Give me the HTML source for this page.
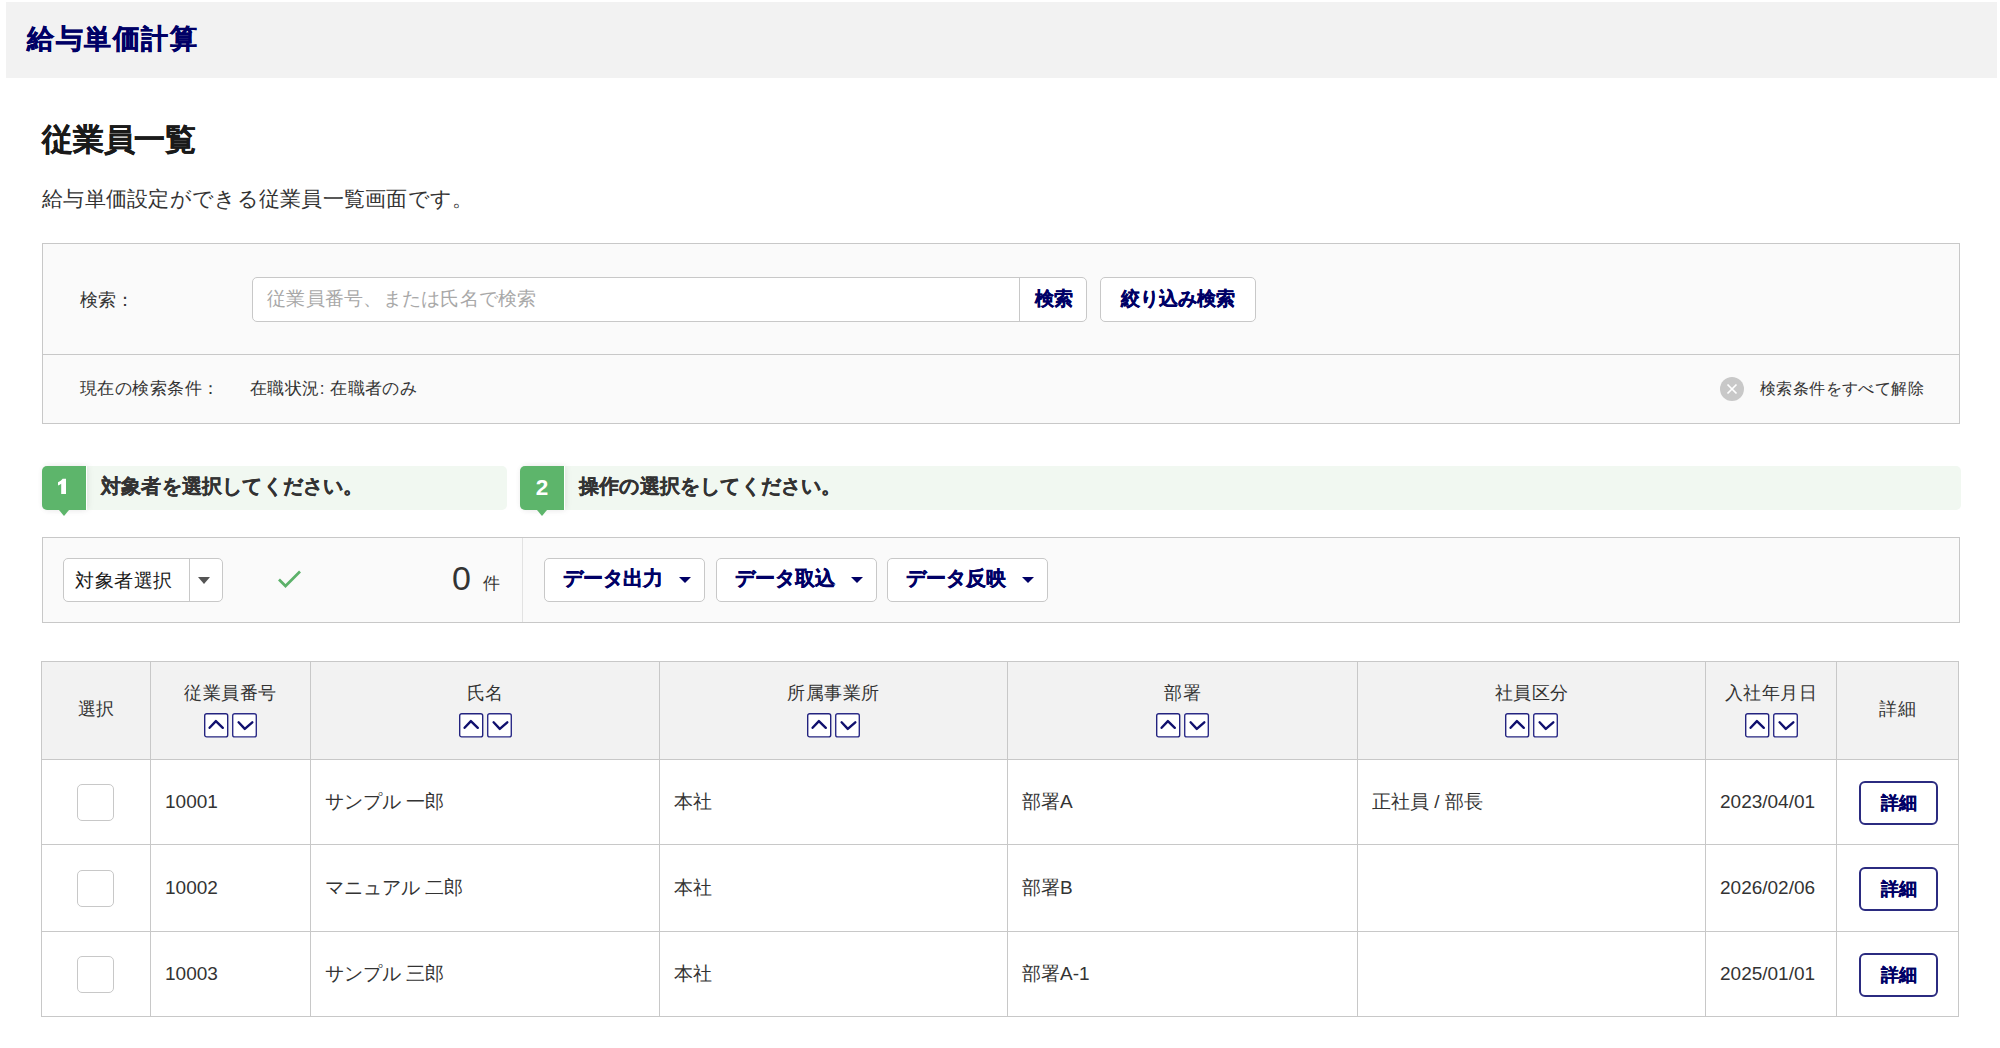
<!DOCTYPE html>
<html lang="ja">
<head>
<meta charset="utf-8">
<title>従業員一覧</title>
<style>
*{box-sizing:border-box;margin:0;padding:0}
html,body{width:2000px;height:1048px;background:#fff;overflow:hidden}
body{font-family:"Liberation Sans",sans-serif;color:#333;position:relative}
.abs{position:absolute}
.nw{white-space:nowrap;line-height:1}
#hdr{left:6px;top:2px;width:1991px;height:76px;background:#f2f2f2}
#hdr .t{left:21px;top:24px;font-size:27px;letter-spacing:1.6px;font-weight:bold;color:#000066;-webkit-text-stroke:0.5px #000066}
#h1{left:42px;top:124px;font-size:30.5px;letter-spacing:-0.2px;font-weight:bold;color:#1a1a1a;-webkit-text-stroke:0.35px #1a1a1a}
#desc{left:42px;top:188px;font-size:21px;letter-spacing:0.28px;color:#333}

#search{left:42px;top:243px;width:1918px;height:181px;background:#fafafa;border:1px solid #c8c8c8}
#search .div{left:0;top:110px;width:100%;height:1px;background:#c8c8c8}
.lbl{font-size:18px;color:#333}
#inp{left:209px;top:33px;width:835px;height:45px;background:#fff;border:1px solid #c8c8c8;border-radius:5px}
#inp .ph{left:14px;top:11px;font-size:19.25px;letter-spacing:0.25px;color:#a8a8a8}
#inp .sep{left:766px;top:0;width:1px;height:43px;background:#c8c8c8}
#inp .btn{left:767px;top:0;width:67px;height:43px;font-size:19px;font-weight:bold;color:#000066;-webkit-text-stroke:0.35px #000066;text-align:center;line-height:41px}
#shb{left:1057px;top:33px;width:156px;height:45px;background:#fff;border:1px solid #c8c8c8;border-radius:5px;font-size:19px;font-weight:bold;color:#000066;-webkit-text-stroke:0.35px #000066;text-align:center;line-height:41px}
.cond{font-size:17px;letter-spacing:0.45px;color:#333}
#clr{left:1677px;top:133px;width:24px;height:24px;border-radius:50%;background:#c8c8c8}

.step{top:466px;height:44px;background:#f1f8f1;border-radius:5px}
.step .num{left:0;top:0;width:44px;height:44px;background:#5db56b;border-radius:5px 0 0 5px;box-shadow:1px 0 0 #fff,2px 0 7px rgba(0,0,0,0.07),0 0 6px rgba(0,0,0,0.04);color:#fff;font-weight:bold;font-size:22.5px;text-align:center;line-height:44px}
.step .num:after{content:"";position:absolute;left:17px;top:44px;border-left:5px solid transparent;border-right:5px solid transparent;border-top:6px solid #5db56b}
.step .txt{left:59px;top:11px;font-size:19.6px;letter-spacing:0.2px;font-weight:bold;color:#333;-webkit-text-stroke:0.3px #333}

#act{left:42px;top:537px;width:1918px;height:86px;background:#fafafa;border:1px solid #c8c8c8}
#act .vdiv{left:479px;top:0;width:1px;height:84px;background:#e2e2e2}
#sel{left:20px;top:20px;width:160px;height:44px;background:#fff;border:1px solid #c8c8c8;border-radius:5px}
#sel .t{left:11px;top:12px;font-size:19.2px;letter-spacing:0.6px;color:#1a1a1a}
#sel .sep{left:125px;top:0;width:1px;height:42px;background:#c8c8c8}
.caret{width:0;height:0;border-left:6.5px solid transparent;border-right:6.5px solid transparent;border-top:7px solid #555}
.dbtn{top:20px;height:44px;width:161px;background:#fff;border:1px solid #c8c8c8;border-radius:5px}
.dbtn .t{left:18px;top:9px;font-size:20px;font-weight:bold;color:#000066;-webkit-text-stroke:0.35px #000066}
.dbtn .caret{left:134px;top:18px;border-left-width:6px;border-right-width:6px;border-top:6px solid #000066}

#tbl{left:41px;top:661px;border-collapse:collapse;table-layout:fixed}
#tbl td,#tbl th{border:1px solid #c8c8c8;vertical-align:middle}
#tbl th{background:#f2f2f2;height:98px;font-weight:normal;font-size:18.4px;letter-spacing:0.5px;line-height:1;color:#333;text-align:center;vertical-align:top;padding-top:22px}
#tbl th.one{padding-top:0;padding-bottom:2px;vertical-align:middle}
#tbl td{font-size:19px;color:#333;padding-left:14px;padding-bottom:1px;background:#fff}
.sorts{display:flex;justify-content:center;margin-top:11px;padding-left:1px}
.sb{width:24px;height:24px;border:2px solid #30308a;border-radius:3px;background:#fff;position:relative}
.sb svg{position:absolute;left:2px;top:2px}
.cb{width:37px;height:37px;border:1px solid #c8c8c8;border-radius:5px;background:#fff;margin:0 0 0 35px}
.det{width:79px;height:44px;border:2px solid #2b2b80;border-radius:6px;background:#fff;font-weight:bold;font-size:18px;color:#000066;-webkit-text-stroke:0.2px #000066;text-align:center;line-height:40px;margin:0 auto;position:relative;left:1px;top:1px}
</style>
</head>
<body>
<div id="hdr" class="abs"><div class="t abs nw">給与単価計算</div></div>
<div id="h1" class="abs nw">従業員一覧</div>
<div id="desc" class="abs nw">給与単価設定ができる従業員一覧画面です。</div>

<div id="search" class="abs">
  <div class="abs nw lbl" style="left:37px;top:47px">検索：</div>
  <div id="inp" class="abs">
    <div class="ph abs nw">従業員番号、または氏名で検索</div>
    <div class="sep abs"></div>
    <div class="btn abs nw">検索</div>
  </div>
  <div id="shb" class="abs nw">絞り込み検索</div>
  <div class="div abs"></div>
  <div class="abs nw cond" style="left:37px;top:136px">現在の検索条件：</div>
  <div class="abs nw cond" style="left:207px;top:136px">在職状況: 在職者のみ</div>
  <div id="clr" class="abs"><svg width="24" height="24" viewBox="0 0 24 24"><path d="M7.5 7.5L16.5 16.5M16.5 7.5L7.5 16.5" stroke="#fff" stroke-width="1.7" fill="none"/></svg></div>
  <div class="abs nw cond" style="left:1717px;top:136px;font-size:16.4px;letter-spacing:0.4px">検索条件をすべて解除</div>
</div>

<div class="step abs" style="left:42px;width:465px">
  <div class="num abs"><svg style="position:absolute;left:0;top:0" width="44" height="44" viewBox="0 0 44 44"><path d="M24 12.8H20.6C19.6 14.3 18 15.6 16 16.3V19.5C17.2 19.1 18.3 18.5 19.2 17.7V27.9H24Z" fill="#fff"/></svg></div>
  <div class="txt abs nw">対象者を選択してください。</div>
</div>
<div class="step abs" style="left:520px;width:1441px">
  <div class="num abs">2</div>
  <div class="txt abs nw">操作の選択をしてください。</div>
</div>

<div id="act" class="abs">
  <div id="sel" class="abs">
    <div class="t abs nw">対象者選択</div>
    <div class="sep abs"></div>
    <div class="caret abs" style="left:134px;top:18px"></div>
  </div>
  <svg class="abs" style="left:233px;top:30px" width="28" height="22" viewBox="0 0 28 22"><path d="M3 11.5L9.5 18L24 3.5" stroke="#5cb16a" stroke-width="2.7" fill="none"/></svg>
  <div class="abs nw" style="left:409px;top:23px;font-size:34px;color:#333">0</div>
  <div class="abs nw" style="left:440px;top:37px;font-size:17px;color:#333">件</div>
  <div class="vdiv abs"></div>
  <div class="dbtn abs" style="left:501px"><div class="t abs nw">データ出力</div><div class="caret abs"></div></div>
  <div class="dbtn abs" style="left:673px"><div class="t abs nw">データ取込</div><div class="caret abs"></div></div>
  <div class="dbtn abs" style="left:844px"><div class="t abs nw">データ反映</div><div class="caret abs"></div></div>
</div>

<table id="tbl" class="abs">
<colgroup><col style="width:109px"><col style="width:160px"><col style="width:349px"><col style="width:348px"><col style="width:350px"><col style="width:348px"><col style="width:131px"><col style="width:122px"></colgroup>
<tr>
<th class="one">選択</th>
<th>従業員番号<div class="sorts"><svg width="54" height="25" viewBox="0 0 54 25"><rect x="0.7" y="0.7" width="23" height="23.2" rx="2" fill="#fff" stroke="#23237f" stroke-width="1.4"/><rect x="28.7" y="0.7" width="23.6" height="23.2" rx="2" fill="#fff" stroke="#2c2c88" stroke-width="1.4"/><path d="M5.6 14.8L11.9 8.1L18.8 14.8" stroke="#10106e" stroke-width="2.4" stroke-linecap="round" stroke-linejoin="round" fill="none"/><path d="M34.6 9.3L40.8 15.9L48.3 9.3" stroke="#10106e" stroke-width="2.4" stroke-linecap="round" stroke-linejoin="round" fill="none"/></svg></div></th>
<th>氏名<div class="sorts"><svg width="54" height="25" viewBox="0 0 54 25"><rect x="0.7" y="0.7" width="23" height="23.2" rx="2" fill="#fff" stroke="#23237f" stroke-width="1.4"/><rect x="28.7" y="0.7" width="23.6" height="23.2" rx="2" fill="#fff" stroke="#2c2c88" stroke-width="1.4"/><path d="M5.6 14.8L11.9 8.1L18.8 14.8" stroke="#10106e" stroke-width="2.4" stroke-linecap="round" stroke-linejoin="round" fill="none"/><path d="M34.6 9.3L40.8 15.9L48.3 9.3" stroke="#10106e" stroke-width="2.4" stroke-linecap="round" stroke-linejoin="round" fill="none"/></svg></div></th>
<th>所属事業所<div class="sorts"><svg width="54" height="25" viewBox="0 0 54 25"><rect x="0.7" y="0.7" width="23" height="23.2" rx="2" fill="#fff" stroke="#23237f" stroke-width="1.4"/><rect x="28.7" y="0.7" width="23.6" height="23.2" rx="2" fill="#fff" stroke="#2c2c88" stroke-width="1.4"/><path d="M5.6 14.8L11.9 8.1L18.8 14.8" stroke="#10106e" stroke-width="2.4" stroke-linecap="round" stroke-linejoin="round" fill="none"/><path d="M34.6 9.3L40.8 15.9L48.3 9.3" stroke="#10106e" stroke-width="2.4" stroke-linecap="round" stroke-linejoin="round" fill="none"/></svg></div></th>
<th>部署<div class="sorts"><svg width="54" height="25" viewBox="0 0 54 25"><rect x="0.7" y="0.7" width="23" height="23.2" rx="2" fill="#fff" stroke="#23237f" stroke-width="1.4"/><rect x="28.7" y="0.7" width="23.6" height="23.2" rx="2" fill="#fff" stroke="#2c2c88" stroke-width="1.4"/><path d="M5.6 14.8L11.9 8.1L18.8 14.8" stroke="#10106e" stroke-width="2.4" stroke-linecap="round" stroke-linejoin="round" fill="none"/><path d="M34.6 9.3L40.8 15.9L48.3 9.3" stroke="#10106e" stroke-width="2.4" stroke-linecap="round" stroke-linejoin="round" fill="none"/></svg></div></th>
<th>社員区分<div class="sorts"><svg width="54" height="25" viewBox="0 0 54 25"><rect x="0.7" y="0.7" width="23" height="23.2" rx="2" fill="#fff" stroke="#23237f" stroke-width="1.4"/><rect x="28.7" y="0.7" width="23.6" height="23.2" rx="2" fill="#fff" stroke="#2c2c88" stroke-width="1.4"/><path d="M5.6 14.8L11.9 8.1L18.8 14.8" stroke="#10106e" stroke-width="2.4" stroke-linecap="round" stroke-linejoin="round" fill="none"/><path d="M34.6 9.3L40.8 15.9L48.3 9.3" stroke="#10106e" stroke-width="2.4" stroke-linecap="round" stroke-linejoin="round" fill="none"/></svg></div></th>
<th>入社年月日<div class="sorts"><svg width="54" height="25" viewBox="0 0 54 25"><rect x="0.7" y="0.7" width="23" height="23.2" rx="2" fill="#fff" stroke="#23237f" stroke-width="1.4"/><rect x="28.7" y="0.7" width="23.6" height="23.2" rx="2" fill="#fff" stroke="#2c2c88" stroke-width="1.4"/><path d="M5.6 14.8L11.9 8.1L18.8 14.8" stroke="#10106e" stroke-width="2.4" stroke-linecap="round" stroke-linejoin="round" fill="none"/><path d="M34.6 9.3L40.8 15.9L48.3 9.3" stroke="#10106e" stroke-width="2.4" stroke-linecap="round" stroke-linejoin="round" fill="none"/></svg></div></th>
<th class="one">詳細</th>
</tr>
<tr style="height:85px"><td style="padding:0"><div class="cb"></div></td><td>10001</td><td>サンプル 一郎</td><td>本社</td><td>部署A</td><td>正社員 / 部長</td><td>2023/04/01</td><td style="padding:0"><div class="det">詳細</div></td></tr>
<tr style="height:87px"><td style="padding:0"><div class="cb"></div></td><td>10002</td><td>マニュアル 二郎</td><td>本社</td><td>部署B</td><td></td><td>2026/02/06</td><td style="padding:0"><div class="det">詳細</div></td></tr>
<tr style="height:85px"><td style="padding:0"><div class="cb"></div></td><td>10003</td><td>サンプル 三郎</td><td>本社</td><td>部署A-1</td><td></td><td>2025/01/01</td><td style="padding:0"><div class="det">詳細</div></td></tr>
</table>
</body>
</html>
